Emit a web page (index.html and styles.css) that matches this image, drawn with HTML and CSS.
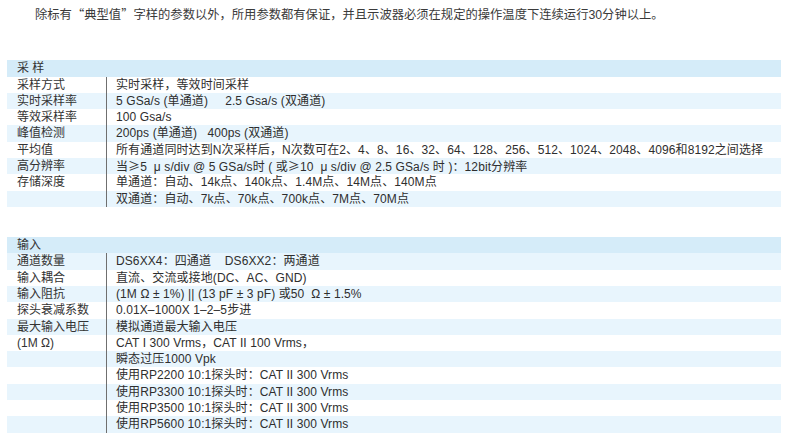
FILE: index.html
```html
<!DOCTYPE html>
<html lang="zh-CN">
<head>
<meta charset="utf-8">
<link rel="stylesheet" href="styles.css">
</head>
<body>
<div class="page">
  <p class="intro">除标有<span class="cjk">“</span>典型值<span class="cjk">”</span>字样的参数以外，所用参数都有保证，并且示波器必须在规定的操作温度下连续运行30分钟以上。</p>

  <section class="spec">
    <div class="head">采 样</div>
    <div class="row"><div class="label">采样方式</div><div class="value">实时采样，等效时间采样</div></div>
    <div class="row alt"><div class="label">实时采样率</div><div class="value">5 GSa/s (单通道)&nbsp;&nbsp;&nbsp;&nbsp; 2.5 Gsa/s (双通道)</div></div>
    <div class="row"><div class="label">等效采样率</div><div class="value">100 Gsa/s</div></div>
    <div class="row alt"><div class="label">峰值检测</div><div class="value">200ps&nbsp;(单通道)&nbsp;&nbsp; 400ps&nbsp;(双通道)</div></div>
    <div class="row"><div class="label">平均值</div><div class="value">所有通道同时达到N次采样后，N次数可在2、4、8、16、32、64、128、256、512、1024、2048、4096和8192之间选择</div></div>
    <div class="row alt"><div class="label">高分辨率</div><div class="value">当<span class="cjk">≥</span>5&nbsp; μ s/div @ 5 GSa/s时 ( 或<span class="cjk">≥</span>10&nbsp; μ s/div @ 2.5 GSa/s 时 )：12bit分辨率</div></div>
    <div class="row"><div class="label">存储深度</div><div class="value">单通道：自动、14k点、140k点、1.4M点、14M点、140M点</div></div>
    <div class="row alt"><div class="label"></div><div class="value">双通道：自动、7k点、70k点、700k点、7M点、70M点</div></div>
  </section>

  <section class="spec">
    <div class="head">输入</div>
    <div class="row alt"><div class="label">通道数量</div><div class="value">DS6XX4：四通道&nbsp;&nbsp;&nbsp; DS6XX2：两通道</div></div>
    <div class="row"><div class="label">输入耦合</div><div class="value">直流、交流或接地(DC、AC、GND)</div></div>
    <div class="row alt"><div class="label">输入阻抗</div><div class="value">(1M Ω ± 1%) || (13 pF ± 3 pF) 或50&nbsp; Ω ± 1.5%</div></div>
    <div class="row"><div class="label">探头衰减系数</div><div class="value">0.01X–1000X 1–2–5步进</div></div>
    <div class="row alt"><div class="label">最大输入电压</div><div class="value">模拟通道最大输入电压</div></div>
    <div class="row"><div class="label">(1M Ω)</div><div class="value">CAT I 300 Vrms，CAT II 100 Vrms，</div></div>
    <div class="row alt"><div class="label"></div><div class="value">瞬态过压1000 Vpk</div></div>
    <div class="row"><div class="label"></div><div class="value">使用RP2200 10:1探头时：CAT II 300 Vrms</div></div>
    <div class="row alt"><div class="label"></div><div class="value">使用RP3300 10:1探头时：CAT II 300 Vrms</div></div>
    <div class="row"><div class="label"></div><div class="value">使用RP3500 10:1探头时：CAT II 300 Vrms</div></div>
    <div class="row alt"><div class="label"></div><div class="value">使用RP5600 10:1探头时：CAT II 300 Vrms</div></div>
  </section>
</div>
</body>
</html>
```

FILE: styles.css
```css
html, body {
  margin: 0;
  padding: 0;
  background: #ffffff;
}

body {
  font-family: "Liberation Sans", "Noto Sans CJK SC", sans-serif;
  font-size: 12px;
  color: #333333;
}

.page {
  padding: 0 6px 0 7px;
  width: 774px;
}

.intro {
  margin: 6px 0 0 0;
  padding-left: 28px;
  font-size: 12.3px;
  line-height: 16px;
  color: #3a3a3a;
}

.cjk {
  font-family: "Noto Sans CJK SC", sans-serif;
}

.spec {
  display: flex;
  flex-direction: column;
}

.spec:first-of-type {
  margin-top: 37px;
}

.spec + .spec {
  margin-top: 30px;
}

.head {
  height: 16.5px;
  line-height: 16.5px;
  background: #d5ecf9;
  padding-left: 10px;
  white-space: nowrap;
}

.row {
  display: flex;
  height: 16.3px;
  line-height: 16.3px;
  white-space: nowrap;
}

.row.alt {
  background: #e8f5fd;
}

.label {
  width: 99px;
  flex: none;
  padding-left: 10px;
  box-sizing: border-box;
}

.value {
  flex: 1;
  border-left: 1.5px solid #6f6f6f;
  padding-left: 9px;
  color: #2e2e2e;
  letter-spacing: 0.1px;
}
```
